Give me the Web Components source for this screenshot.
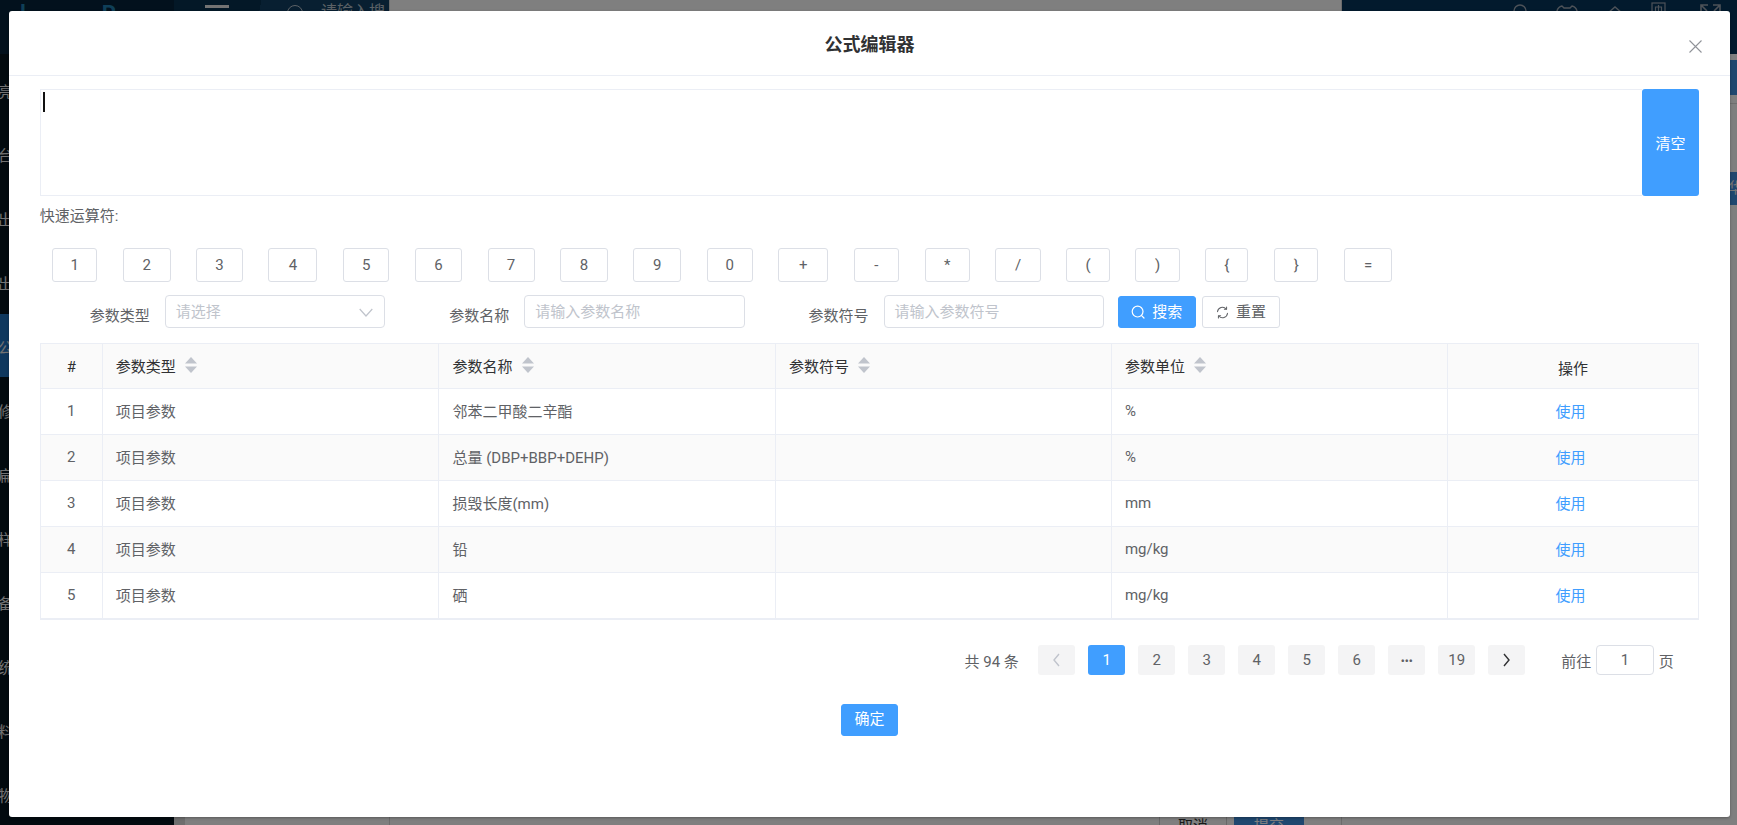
<!DOCTYPE html>
<html lang="zh-CN">
<head>
<meta charset="utf-8">
<title>公式编辑器</title>
<style>
html,body{margin:0;padding:0;height:100%;overflow:hidden;background:#fff}
body{font-family:Roboto,"Noto Sans CJK SC",sans-serif;font-size:15px;color:#606266}
</style>
</head>
<body>
<app-shell>
  <modal-dialog heading="公式编辑器">
    <formula-box></formula-box>
    <op-buttons></op-buttons>
    <param-filter></param-filter>
    <param-table></param-table>
    <pager-bar></pager-bar>
    <ui-button slot="footer" kind="primary" style="width:57px;height:32px">确定</ui-button>
  </modal-dialog>
</app-shell>
<script>
const FONT='Roboto,"Noto Sans CJK SC",sans-serif';
function def(name,html,setup){
  customElements.define(name,class extends HTMLElement{
    constructor(){super();this.attachShadow({mode:'open'}).innerHTML=typeof html==='function'?html(this):html;}
    connectedCallback(){ if(setup) setup(this); }
  });
}
const ICON_SEARCH='<svg width="14" height="14" viewBox="0 0 14 14" fill="none" stroke="currentColor" stroke-width="1.2" stroke-linecap="round"><circle cx="6.6" cy="6.6" r="5.4"/><path d="M10.6 10.6L13 13"/></svg>';
const ICON_REFRESH='<svg width="13" height="13" viewBox="0 0 14 14" fill="none" stroke="currentColor" stroke-width="1.1" stroke-linecap="round" stroke-linejoin="round"><path d="M1.6 6.2A5.4 5.4 0 0 1 11 3.2"/><path d="M12.4 7.8A5.4 5.4 0 0 1 3 10.8"/><path d="M11.4 1.2V3.6H9"/><path d="M2.6 12.8V10.4H5"/></svg>';
const CHEV=(d,c)=>`<svg width="9" height="14" viewBox="0 0 9 14" fill="none" stroke="${c}" stroke-width="1.4"><path d="${d}"/></svg>`;

def('ui-button',`<style>
:host{display:inline-flex;box-sizing:border-box;align-items:center;justify-content:center;gap:7px;border:1px solid #dcdfe6;border-radius:3px;background:#fff;color:#606266;font:15px/1 ${FONT};white-space:nowrap;flex:none}
:host([kind=primary]){background:#409eff;border-color:#409eff;color:#fff}
::slotted(svg){flex:none}
</style><slot></slot>`);

def('app-shell',`<style>
:host{display:block;position:relative;width:1737px;height:825px;overflow:hidden;font:15px ${FONT}}
.page{display:flex;height:843px}
.side{width:174px;flex:none;background:#04141f;display:flex;flex-direction:column}
.logo{height:54px;background:#05223a;color:#1e7fb0;font-weight:700;font-size:22px;line-height:28px;display:flex;box-sizing:border-box;padding-left:20px;gap:76px;flex:none}
.menu{padding-top:4px;display:flex;flex-direction:column;color:#e6e6e6;text-indent:-2px}
.menu div{height:64px;line-height:68px;overflow:hidden;flex:none}
.menu .on{background:#1f70bd;height:63px;margin-bottom:1px}
.cola{width:215px;flex:none;display:flex;flex-direction:column;background:linear-gradient(90deg,#dcdcdc 0 11px,#fff 11px)}
.hd1{height:54px;flex:none;background:linear-gradient(100deg,#07304f 0 86px,#103f63 86px);display:flex;color:#b9c3cc;overflow:hidden}
.bar{width:24px;height:3px;background:#e6e6e6;margin:5px 0 0 31px;flex:none}
.mag{margin:5px 0 0 58px;flex:none;width:16px;height:16px;box-sizing:border-box;border:1.5px solid #b9c3cc;border-radius:50%}
.q{margin:1px 0 0 18px;white-space:nowrap;font-size:16px;line-height:22px}
.colb{width:953px;flex:none;box-sizing:border-box;background:#fff;border-left:1px solid #d8d8d8;border-right:1px solid #d8d8d8;display:flex;justify-content:flex-end;align-items:flex-end;gap:7px;padding:0 37px 0 0}
.f{width:68px;height:36px;box-sizing:border-box;border:1px solid #d0d0d0;font-size:15px;line-height:36px;text-align:center;color:#333;background:#fff}
.f.p{width:70px;background:#3f8fdf;color:#fff;border-color:#3f8fdf}
.colc{flex:1;min-width:0;background:#fff;display:flex;flex-direction:column}
.hd2{height:54px;flex:none;background:#05345a;display:flex;color:#9aa5b1;padding:4px 0 0 171px;box-sizing:border-box}
.hd2 svg{flex:none}
.band{background:#3f8fdf;flex:none;overflow:hidden;color:#eee;white-space:nowrap}
.b1{height:35px;margin-top:6px}
.b2{height:33px;padding-left:386px;line-height:33px;margin-top:68px}
.rule{height:1px;background:#dedede;margin-top:8px}
.shade{position:absolute;inset:0;background:rgba(0,0,0,.5)}
</style>
<div class="page">
  <div class="side">
    <div class="logo"><span>l</span><span>P</span></div>
    <div class="menu"><div>亮</div><div>台</div><div>出</div><div>出</div><div class="on">公</div><div>修</div><div>扁</div><div>样</div><div>备</div><div>统</div><div>料</div><div>物</div></div>
  </div>
  <div class="cola"><div class="hd1"><div class="bar"></div><div class="mag"></div><div class="q">请输入搜</div></div></div>
  <div class="colb"><div class="f">取消</div><div class="f p">提交</div></div>
  <div class="colc">
    <div class="hd2">
      <svg width="14" height="20" viewBox="0 0 14 20" fill="none" stroke="currentColor" stroke-width="1.4"><circle cx="7" cy="7" r="6"/></svg>
      <svg width="22" height="20" viewBox="0 0 22 20" fill="none" stroke="currentColor" stroke-width="1.4" style="margin-left:29px"><path d="M1 7Q2 3 6 2L8 4H14L16 2Q20 3 21 7V14H1Z"/></svg>
      <svg width="16" height="20" viewBox="0 0 16 20" fill="none" stroke="currentColor" stroke-width="1.4" style="margin-left:29px"><path d="M1 9L8 3L15 9V16H1Z"/></svg>
      <svg width="16" height="20" viewBox="0 0 16 20" fill="none" stroke="currentColor" stroke-width="1.2" style="margin-left:28px;margin-top:-2px"><rect x="1" y="1" width="13" height="13"/><path d="M4.5 5H10.5V9.5H4.5ZM7.5 3V12"/></svg>
      <svg width="21" height="20" viewBox="0 0 21 20" fill="none" stroke="currentColor" stroke-width="1.6" style="margin-left:33px"><path d="M1 9V1H8M1 1L7 7M20 9V1H13M20 1L14 7"/></svg>
    </div>
    <div class="band b1"></div><div class="rule"></div>
    <div class="band b2">华</div>
  </div>
</div>
<div class="shade"></div>
<slot></slot>`);

def('modal-dialog',h=>`<style>
:host{display:flex;flex-direction:column;position:absolute;left:9px;top:11px;width:1721px;height:806px;box-sizing:border-box;background:#fff;border-radius:3px;box-shadow:0 1px 3px rgba(0,0,0,.3);color:#606266;font:15px ${FONT}}
header{flex:none;height:65px;box-sizing:border-box;border-bottom:1px solid #ebeef5;display:grid;grid-template-columns:1fr auto 1fr;align-items:center;padding:4px 28px 0 28px}
h2{margin:0;font:700 18px/24px ${FONT};color:#303133;grid-column:2}
svg{justify-self:end;grid-column:3;margin-top:3px}
main{flex:1;min-height:0;padding:13px 31px 0 30.8px;display:flex;flex-direction:column}
footer{display:flex;justify-content:center;margin-top:28.5px}
</style>
<header><h2>${h.getAttribute('heading')||''}</h2><svg width="13" height="13" viewBox="0 0 13 13" stroke="#909399" stroke-width="1.1" fill="none"><path d="M.5.5L12.5 12.5M12.5.5L.5 12.5"/></svg></header>
<main><slot></slot><footer><slot name="footer"></slot></footer></main>`);

def('formula-box',`<style>
:host{display:flex;flex:none;height:107px;color:#606266}
.ed{flex:1;box-sizing:border-box;border:1px solid #ebeef5;border-right:0;padding:2px 2px}
.caret{width:2px;height:20px;background:#111}
button{width:57px;flex:none;border:0;border-radius:3px;background:#409eff;color:#fff;font:15px ${FONT};padding:0}
</style><div class="ed"><div class="caret"></div></div><button>清空</button>`);

def('op-buttons',()=>{
  const ops=[['1',45.2],['2',47.7],['3',46.6],['4',49],['5',46.5],['6',47],['7',47.1],['8',47.5],['9',47.7],['0',46.3],['+',49.7],['-',45.5],['*',45.2],['/',45.5],['(',43.3],[')',44.4],['{',43.2],['}',44.4],['=',48.2]];
  return `<style>
:host{display:block;flex:none}
.t{font-size:15px;line-height:21px;margin-top:10px;color:#606266}
.r{display:flex;gap:25.57px;padding-left:12.4px;margin-top:21px}
ui-button{height:34.4px;font-size:15px}
</style><div class="t">快速运算符:</div><div class="r">${ops.map(o=>`<ui-button style="width:${o[1]}px">${o[0]}</ui-button>`).join('')}</div>`;
});

def('param-filter',`<style>
:host{display:flex;flex:none;align-items:flex-start;margin-top:12.6px;font-size:15px;color:#606266}
label{box-sizing:border-box;text-align:right;padding-right:15px;line-height:21px;margin-top:11px;flex:none}
.l1{width:125px}.l2{width:138.7px}
.in{width:220.7px;height:33.4px;box-sizing:border-box;border:1px solid #dcdfe6;border-radius:4px;flex:none;display:flex;align-items:center;justify-content:space-between;padding:1px 11px 0 10px;color:#c0c4cc;line-height:1}
.btns{display:flex;gap:6.3px;margin:.7px 0 0 13.8px}
ui-button{height:32px;padding-top:1px}
</style>
<label class="l1">参数类型</label><div class="in">请选择<svg width="14" height="9" viewBox="0 0 14 9" fill="none" stroke="#c0c4cc" stroke-width="1.2"><path d="M.7 1L7 8L13.3 1"/></svg></div>
<label class="l2">参数名称</label><div class="in">请输入参数名称</div>
<label class="l2">参数符号</label><div class="in">请输入参数符号</div>
<div class="btns"><ui-button kind="primary" style="width:77.6px">${ICON_SEARCH}搜索</ui-button><ui-button style="width:78.4px">${ICON_REFRESH}重置</ui-button></div>`);

def('param-table',()=>{
  const rows=[['项目参数','邻苯二甲酸二辛酯','%'],['项目参数','总量 (DBP+BBP+DEHP)','%'],['项目参数','损毁长度(mm)','mm'],['项目参数','铅','mg/kg'],['项目参数','硒','mg/kg']];
  const sort='<svg class="s" width="12" height="16" viewBox="0 0 12 16" fill="#c0c4cc"><path d="M6 0L12 6.6H0Z"/><path d="M6 16L12 9.4H0Z"/></svg>';
  const th=t=>`<th><span class="h">${t}${sort}</span></th>`;
  return `<style>
:host{display:block;flex:none;margin-top:15px;font-size:15px}
table{border-collapse:separate;border-spacing:0;table-layout:fixed;width:1659.2px;border-top:1px solid #ebeef5;border-left:1px solid #ebeef5;border-bottom:1px solid #ebeef5}
th,td{box-sizing:border-box;border-right:1px solid #ebeef5;border-bottom:1px solid #ebeef5;padding:0 0 0 13px;text-align:left;font-weight:400;color:#606266;height:46px;white-space:nowrap}
td{padding-bottom:2px}
th{background:#fafafa;color:#303133;height:45px}
.h{display:inline-flex;align-items:center;gap:9px;position:relative;top:-1px}
td.n{text-align:center;padding:0 0 2px}
td.o{text-align:center;padding:0 5px 2px 0}
th.o,th.n{padding:0;text-align:center}
th.o span,th.n span{position:relative;top:1px}
tr:nth-child(even) td{background:#fafafa}
a{color:#409eff;text-decoration:none}
</style><table>
<colgroup><col style="width:62px"><col style="width:336.7px"><col style="width:336.4px"><col style="width:336px"><col style="width:336px"><col></colgroup>
<thead><tr><th class="n"><span>#</span></th>${th('参数类型')}${th('参数名称')}${th('参数符号')}${th('参数单位')}<th class="o"><span>操作</span></th></tr></thead>
<tbody>${rows.map((r,i)=>`<tr><td class="n">${i+1}</td><td>${r[0]}</td><td>${r[1]}</td><td></td><td>${r[2]}</td><td class="o"><a>使用</a></td></tr>`).join('')}</tbody></table>`;
});

def('pager-bar',()=>{
  const pg=['1','2','3','4','5','6','•••','19'];
  return `<style>
:host{display:flex;flex:none;align-items:center;margin-top:25px;height:30px;padding-left:924.7px;font-size:15px;color:#606266;white-space:nowrap}
.tot{width:73.8px;flex:none}
.p{display:flex;gap:13px;flex:none}
.b{width:37px;height:30px;border-radius:3px;background:#f4f4f5;display:flex;align-items:center;justify-content:center;color:#606266}
.b.on{background:#409eff;color:#fff}
.m{font-size:11px;font-weight:700;padding-top:2px;box-sizing:border-box}
.go{margin-left:36px;display:flex;align-items:center;flex:none}
.i{width:57.5px;height:30px;box-sizing:border-box;border:1px solid #dcdfe6;border-radius:4px;margin:0 5px;display:flex;align-items:center;justify-content:center}
</style><span class="tot">共 94 条</span><div class="p"><div class="b">${CHEV('M7 1L2 7L7 13','#c0c4cc')}</div>${pg.map((t,i)=>`<div class="b ${i==0?'on':''} ${t.length==3?'m':''}">${t}</div>`).join('')}<div class="b">${CHEV('M2 1L7 7L2 13','#303133')}</div></div><div class="go">前往<div class="i">1</div>页</div>`;
});
</script>
</body>
</html>
